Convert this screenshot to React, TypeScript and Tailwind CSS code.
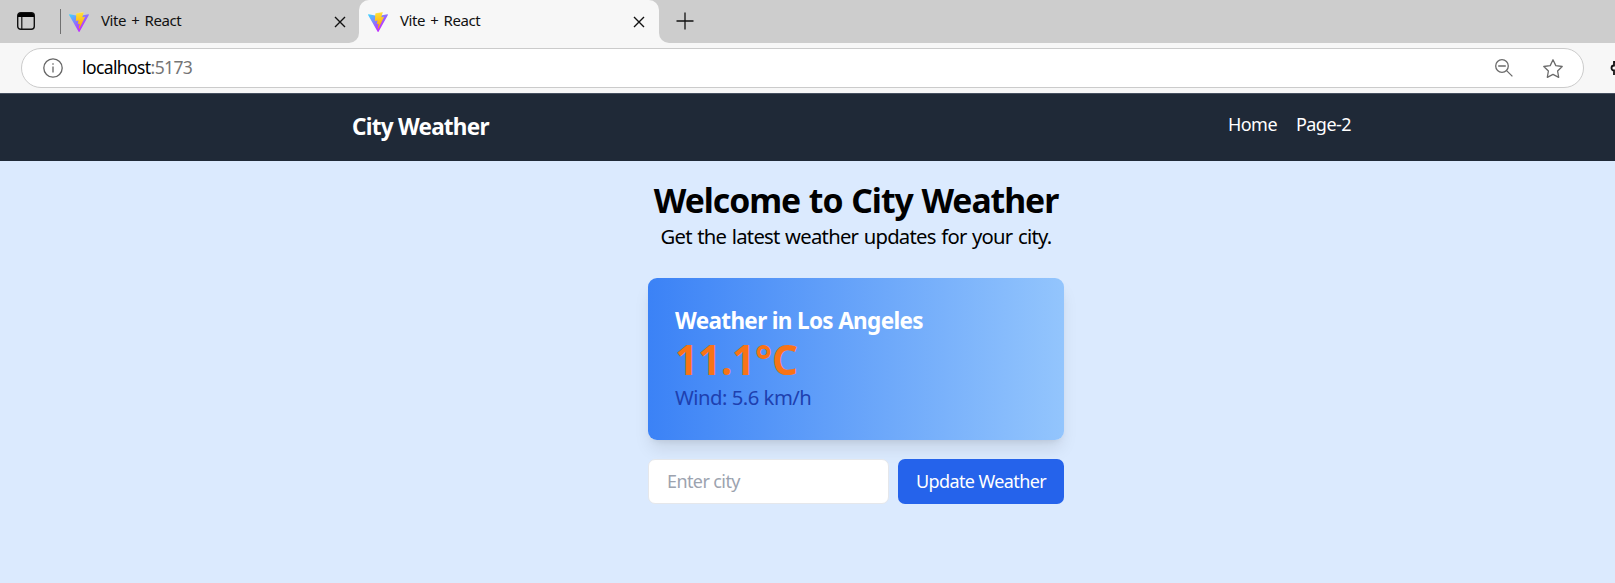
import React from "react";

function ViteLogo({ id }: { id: string }) {
  return (
    <svg viewBox="0 0 256 257" className="h-[20px] w-[20px] shrink-0">
      <defs>
        <linearGradient id={id + "a"} x1="-.828%" x2="57.636%" y1="7.652%" y2="78.411%">
          <stop offset="0%" stopColor="#41D1FF" />
          <stop offset="100%" stopColor="#BD34FE" />
        </linearGradient>
        <linearGradient id={id + "b"} x1="43.376%" x2="50.316%" y1="2.242%" y2="89.03%">
          <stop offset="0%" stopColor="#FFEA83" />
          <stop offset="8.333%" stopColor="#FFDD35" />
          <stop offset="100%" stopColor="#FFA800" />
        </linearGradient>
      </defs>
      <path
        fill={`url(#${id}a)`}
        d="M255.153 37.938L134.897 252.976c-2.483 4.44-8.862 4.466-11.382.048L.875 37.958c-2.746-4.814 1.371-10.646 6.827-9.67l120.385 21.517a6.537 6.537 0 0 0 2.322-.004l117.867-21.483c5.438-.991 9.574 4.796 6.877 9.62Z"
      />
      <path
        fill={`url(#${id}b)`}
        d="M185.432.063L96.44 17.501a3.268 3.268 0 0 0-2.634 3.014l-5.474 92.456a3.268 3.268 0 0 0 3.997 3.378l24.777-5.718c2.318-.535 4.413 1.507 3.936 3.838l-7.361 36.047c-.495 2.426 1.782 4.5 4.151 3.78l15.304-4.649c2.372-.72 4.652 1.36 4.15 3.788l-11.698 56.621c-.732 3.542 3.979 5.473 5.943 2.437l1.313-2.028l72.516-144.72c1.215-2.423-.88-5.186-3.54-4.672l-25.505 4.922c-2.396.462-4.435-1.77-3.759-4.114l16.646-57.705c.677-2.35-1.37-4.583-3.769-4.113Z"
      />
    </svg>
  );
}

function CloseIcon() {
  return (
    <svg viewBox="0 0 12 12" className="h-3 w-3 shrink-0" fill="none" stroke="#111" strokeWidth="1.4">
      <path d="M1 1l10 10M11 1L1 11" />
    </svg>
  );
}

function TabLabel() {
  return (
    <span className="ml-[12px] flex-1 pb-[3px] text-[15px] leading-[20px] tracking-[-0.45px] text-[#111] [word-spacing:1.8px]">
      Vite + React
    </span>
  );
}

function TabStrip() {
  return (
    <div className="flex h-[43px] bg-[#f7f7f7]">
      <div className="flex h-[43px] w-[359px] items-center rounded-br-[10px] bg-[#cdcdcd] pl-[17px]">
        <svg viewBox="0 0 18 18" className="mb-px h-[18px] w-[18px] shrink-0" fill="none" stroke="#111" strokeWidth="1.4">
          <rect x="0.7" y="0.7" width="16.6" height="16.6" rx="3" />
          <path d="M4.8 5v12" strokeWidth="1.2" />
          <path d="M1 3.5a2.5 2.5 0 0 1 2.5-2.5h11a2.5 2.5 0 0 1 2.5 2.5V5H1z" fill="#000" stroke="none" />
        </svg>
        <div className="ml-[25px] h-[25px] w-px bg-[#707070]" />
        <div className="ml-2 flex flex-1 items-center pr-[13px]">
          <ViteLogo id="t1" />
          <TabLabel />
          <CloseIcon />
        </div>
      </div>
      <div className="flex w-[300px] bg-[#cdcdcd]">
        <div className="flex flex-1 items-center rounded-t-[10px] bg-[#f7f7f7] pl-[9px] pr-[14px]">
          <ViteLogo id="t2" />
          <TabLabel />
          <CloseIcon />
        </div>
      </div>
      <div className="flex flex-1 items-center rounded-bl-[10px] bg-[#cdcdcd] pl-[17px]">
        <svg viewBox="0 0 18 18" className="mb-[2px] h-[18px] w-[18px]" fill="none" stroke="#111" strokeWidth="1.3">
          <path d="M9 0.5v17M0.5 9h17" />
        </svg>
      </div>
    </div>
  );
}

function AddressBar() {
  return (
    <div className="flex h-[50px] overflow-hidden bg-[#f7f7f7] pt-[5px] pl-[21px]">
      <div className="flex h-[40px] w-[1563px] shrink-0 items-center rounded-full border border-[#cbcbcb] bg-white pr-[20px] pl-[21px]">
        <svg viewBox="0 0 20 20" className="h-[20px] w-[20px]" fill="none" stroke="#666" strokeWidth="1.3">
          <circle cx="10" cy="10" r="9.2" />
          <path d="M10 8.6v6M10 5.2v1.6" />
        </svg>
        <span className="ml-[19px] flex-1 pb-[2px] text-[17.5px] leading-[24px] tracking-[-0.6px] text-black">
          localhost<span className="text-[#757575]">:5173</span>
        </span>
        <svg viewBox="0 0 18 18" className="h-[18px] w-[18px]" fill="none" stroke="#6b6b6b" strokeWidth="1.3">
          <circle cx="7" cy="7" r="6.3" />
          <path d="M11.6 11.6l5.8 5.8M3.2 7h7.6" />
        </svg>
        <svg viewBox="0 0 20 19" className="ml-[30px] h-[19px] w-[20px]" fill="none" stroke="#6b6b6b" strokeWidth="1.3" strokeLinejoin="round">
          <path d="M10 0.8l2.8 5.8 6.4 0.9-4.6 4.5 1.1 6.3L10 15.3l-5.7 3 1.1-6.3L0.8 7.5l6.4-0.9z" />
        </svg>
      </div>
      <svg viewBox="0 0 20 20" className="mt-[10px] ml-[25px] h-[20px] w-[20px] shrink-0" fill="none" stroke="#111" strokeWidth="1.8">
        <path d="M5 17v-4.5a2.5 2.5 0 1 1 0-5V4h5" />
      </svg>
    </div>
  );
}

export default function App() {
  return (
    <div className="flex h-[583px] flex-col overflow-hidden bg-[#dbeafe] font-['Noto_Sans',sans-serif]">
      <TabStrip />
      <AddressBar />
      <nav className="flex h-[68px] shrink-0 justify-between border-t border-[#465060] bg-[#1f2937] pt-[17px] pr-[264px] pl-[352px] text-white">
        <div className="text-[22.5px] leading-[31.5px] font-bold tracking-[-0.75px]">City Weather</div>
        <div className="flex gap-[19px] text-[18px] leading-[27px] tracking-[-0.55px]">
          <a>Home</a>
          <a>Page-2</a>
        </div>
      </nav>
      <main className="ml-[648px] w-[416px] pt-[19px]">
        <div className="flex flex-col items-center whitespace-nowrap text-black">
          <h1 className="text-[33.75px] leading-[40.5px] font-bold tracking-[-1.05px] [word-spacing:1px]">Welcome to City Weather</h1>
          <p className="text-[20.25px] leading-[30px] tracking-[-0.75px] [word-spacing:1px]">Get the latest weather updates for your city.</p>
        </div>
        <section className="mt-[27.5px] rounded-[9px] bg-linear-to-r/srgb from-[#3b82f6] to-[#93c5fd] p-[27px] shadow-[0_11px_17px_-3px_rgba(0,0,0,0.1),0_4px_7px_-4px_rgba(0,0,0,0.1)]">
          <h2 className="text-[22.5px] leading-[31.5px] font-bold tracking-[-0.65px] text-white">Weather in Los Angeles</h2>
          <p className="text-[40.5px] leading-[45px] font-bold tracking-[-0.2px] text-[#f97316]">11.1°C</p>
          <p className="text-[20.25px] leading-[31.5px] tracking-[-0.5px] text-[#1e40af]">Wind: 5.6 km/h</p>
        </section>
        <form className="mt-[19px] flex gap-[9px]">
          <input
            className="h-[45px] w-[241px] rounded-[7px] border border-[#e5e7eb] bg-white px-[18px] pb-px text-[18px] tracking-[-0.6px] placeholder:text-[#9ca3af]"
            placeholder="Enter city"
          />
          <button type="button" className="h-[45px] flex-1 rounded-[7px] bg-[#2563eb] text-[18px] tracking-[-0.6px] whitespace-nowrap text-white">
            Update Weather
          </button>
        </form>
      </main>
    </div>
  );
}
